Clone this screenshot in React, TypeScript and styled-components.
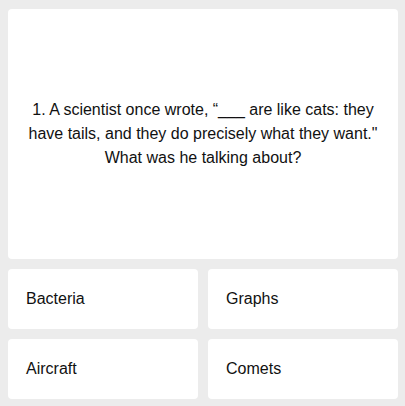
import styled, { createGlobalStyle } from "styled-components";

const GlobalStyle = createGlobalStyle`
  html, body {
    margin: 0;
    background: #ececec;
  }
  body {
    font-family: "Liberation Sans", Arial, sans-serif;
    color: #111;
  }
`;

const Page = styled.div`
  padding: 9px 7px 7px 8px;
  display: flex;
  flex-direction: column;
  gap: 10px;
`;

const Question = styled.div`
  height: 250px;
  background: #fff;
  border-radius: 4px;
  display: flex;
  align-items: center;
  justify-content: center;
  padding: 0 12px;
  box-sizing: border-box;
  text-align: center;
  font-size: 16px;
  line-height: 24px;
`;

const Answers = styled.div`
  display: grid;
  grid-template-columns: 1fr 1fr;
  gap: 10px;
`;

const Answer = styled.button`
  height: 60px;
  background: #fff;
  border: none;
  border-radius: 4px;
  padding: 0 18px;
  text-align: left;
  font-family: inherit;
  font-size: 16px;
  color: #111;
  cursor: pointer;
`;

const answers = ["Bacteria", "Graphs", "Aircraft", "Comets"];

export default function App() {
  return (
    <>
      <GlobalStyle />
      <Page>
        <Question>
          1. A scientist once wrote, “___ are like cats: they have tails, and
          they do precisely what they want." What was he talking about?
        </Question>
        <Answers>
          {answers.map((a) => (
            <Answer key={a}>{a}</Answer>
          ))}
        </Answers>
      </Page>
    </>
  );
}
